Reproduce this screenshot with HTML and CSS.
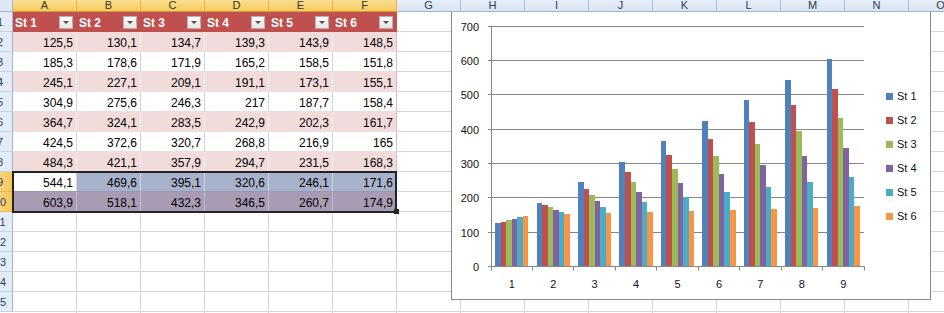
FILE: index.html
```html
<!DOCTYPE html>
<html>
<head>
<meta charset="utf-8">
<link rel="stylesheet" href="styles.css">
</head>
<body>
<div class="sheet">
  <div class="colheads">
    <div class="corner"></div>
    <div class="ch sel">A</div><div class="ch sel">B</div><div class="ch sel">C</div><div class="ch sel">D</div><div class="ch sel">E</div><div class="ch sel">F</div>
    <div class="ch">G</div><div class="ch">H</div><div class="ch">I</div><div class="ch">J</div><div class="ch">K</div><div class="ch">L</div><div class="ch">M</div><div class="ch">N</div><div class="ch">O</div>
  </div>
  <div class="main">
    <div class="rowheads">
      <div class="rh"><span>1</span></div>
      <div class="rh"><span>2</span></div>
      <div class="rh"><span>3</span></div>
      <div class="rh"><span>4</span></div>
      <div class="rh"><span>5</span></div>
      <div class="rh"><span>6</span></div>
      <div class="rh"><span>7</span></div>
      <div class="rh"><span>8</span></div>
      <div class="rh sel"><span>9</span></div>
      <div class="rh sel"><span>10</span></div>
      <div class="rh"><span>11</span></div>
      <div class="rh"><span>12</span></div>
      <div class="rh"><span>13</span></div>
      <div class="rh"><span>14</span></div>
      <div class="rh"><span>15</span></div>
    </div>
    <div class="cells">
      <div class="tbl">
        <div class="hd"><span>St 1</span><i class="dd"></i></div>
        <div class="hd"><span>St 2</span><i class="dd"></i></div>
        <div class="hd"><span>St 3</span><i class="dd"></i></div>
        <div class="hd"><span>St 4</span><i class="dd"></i></div>
        <div class="hd"><span>St 5</span><i class="dd"></i></div>
        <div class="hd"><span>St 6</span><i class="dd"></i></div>

        <div class="v pk">125,5</div><div class="v pk">130,1</div><div class="v pk">134,7</div><div class="v pk">139,3</div><div class="v pk">143,9</div><div class="v pk">148,5</div>
        <div class="v wh">185,3</div><div class="v wh">178,6</div><div class="v wh">171,9</div><div class="v wh">165,2</div><div class="v wh">158,5</div><div class="v wh">151,8</div>
        <div class="v pk">245,1</div><div class="v pk">227,1</div><div class="v pk">209,1</div><div class="v pk">191,1</div><div class="v pk">173,1</div><div class="v pk">155,1</div>
        <div class="v wh">304,9</div><div class="v wh">275,6</div><div class="v wh">246,3</div><div class="v wh">217</div><div class="v wh">187,7</div><div class="v wh">158,4</div>
        <div class="v pk">364,7</div><div class="v pk">324,1</div><div class="v pk">283,5</div><div class="v pk">242,9</div><div class="v pk">202,3</div><div class="v pk">161,7</div>
        <div class="v wh">424,5</div><div class="v wh">372,6</div><div class="v wh">320,7</div><div class="v wh">268,8</div><div class="v wh">216,9</div><div class="v wh">165</div>
        <div class="v pk">484,3</div><div class="v pk">421,1</div><div class="v pk">357,9</div><div class="v pk">294,7</div><div class="v pk">231,5</div><div class="v pk">168,3</div>
        <div class="v active">544,1</div><div class="v s9">469,6</div><div class="v s9">395,1</div><div class="v s9">320,6</div><div class="v s9">246,1</div><div class="v s9">171,6</div>
        <div class="v s10">603,9</div><div class="v s10">518,1</div><div class="v s10">432,3</div><div class="v s10">346,5</div><div class="v s10">260,7</div><div class="v s10">174,9</div>
      </div>
      <div class="selbox"><div class="handle"></div></div>

      <div class="chart">
        <svg class="plot" width="478" height="287" viewBox="0 0 478 287">
          <g class="grid">
            <line x1="36" y1="14.5" x2="412" y2="14.5"/>
            <line x1="36" y1="48.5" x2="412" y2="48.5"/>
            <line x1="36" y1="82.5" x2="412" y2="82.5"/>
            <line x1="36" y1="117.5" x2="412" y2="117.5"/>
            <line x1="36" y1="151.5" x2="412" y2="151.5"/>
            <line x1="36" y1="185.5" x2="412" y2="185.5"/>
            <line x1="36" y1="220.5" x2="412" y2="220.5"/>
          </g>
          <g id="bars" shape-rendering="crispEdges"></g>
          <g class="grid">
            <line x1="39.5" y1="14.5" x2="39.5" y2="254.5"/>
            <line x1="36" y1="254.5" x2="412.5" y2="254.5"/>
            <line x1="39.5" y1="254.5" x2="39.5" y2="258.5"/>
            <line x1="80.5" y1="254.5" x2="80.5" y2="258.5"/>
            <line x1="121.5" y1="254.5" x2="121.5" y2="258.5"/>
            <line x1="163.5" y1="254.5" x2="163.5" y2="258.5"/>
            <line x1="204.5" y1="254.5" x2="204.5" y2="258.5"/>
            <line x1="246.5" y1="254.5" x2="246.5" y2="258.5"/>
            <line x1="287.5" y1="254.5" x2="287.5" y2="258.5"/>
            <line x1="329.5" y1="254.5" x2="329.5" y2="258.5"/>
            <line x1="370.5" y1="254.5" x2="370.5" y2="258.5"/>
            <line x1="412.5" y1="254.5" x2="412.5" y2="258.5"/>
          </g>
          <g class="ylab">
            <text x="27" y="18.5">700</text>
            <text x="27" y="52.5">600</text>
            <text x="27" y="86.5">500</text>
            <text x="27" y="121.5">400</text>
            <text x="27" y="155.5">300</text>
            <text x="27" y="189.5">200</text>
            <text x="27" y="224.5">100</text>
            <text x="27" y="258.5">0</text>
          </g>
          <g class="xlab">
            <text x="59.7" y="276">1</text>
            <text x="101.2" y="276">2</text>
            <text x="142.6" y="276">3</text>
            <text x="184.1" y="276">4</text>
            <text x="225.5" y="276">5</text>
            <text x="267" y="276">6</text>
            <text x="308.4" y="276">7</text>
            <text x="349.9" y="276">8</text>
            <text x="391.3" y="276">9</text>
          </g>
          <g class="legend">
            <rect x="434" y="81" width="7" height="7" fill="#4f81bd"/><text x="445" y="88">St 1</text>
            <rect x="434" y="105" width="7" height="7" fill="#c0504d"/><text x="445" y="112">St 2</text>
            <rect x="434" y="129" width="7" height="7" fill="#9bbb59"/><text x="445" y="136">St 3</text>
            <rect x="434" y="153" width="7" height="7" fill="#8064a2"/><text x="445" y="160">St 4</text>
            <rect x="434" y="177" width="7" height="7" fill="#4bacc6"/><text x="445" y="184">St 5</text>
            <rect x="434" y="201" width="7" height="7" fill="#f79646"/><text x="445" y="208">St 6</text>
          </g>
        </svg>
      </div>
    </div>
  </div>
</div>
<script src="script.js"></script>
</body>
</html>
```

FILE: styles.css
```css
html, body {
  margin: 0;
  padding: 0;
  background: #fff;
  width: 944px;
  height: 313px;
  overflow: hidden;
}
body {
  font-family: "Liberation Sans", Arial, sans-serif;
  color: #000;
}
.sheet {
  width: 944px;
  height: 313px;
  overflow: hidden;
}
.colheads {
  display: flex;
  height: 12px;
  overflow: hidden;
}
.corner {
  flex: 0 0 13px;
  box-sizing: border-box;
  background: #dfe8f4;
  border-right: 1px solid #9eb6ce;
  border-bottom: 1px solid #9eb6ce;
}
.ch {
  flex: 0 0 64px;
  box-sizing: border-box;
  height: 12px;
  background: linear-gradient(#e6eef8, #d9e4f2);
  border-right: 1px solid #a9bfd6;
  border-bottom: 1px solid #9eb6ce;
  font-size: 11px;
  line-height: 11px;
  text-align: center;
  color: #2e3d52;
}
.ch.sel {
  background: linear-gradient(#fadf92, #f6ca5e);
  border-right-color: #e7b64f;
  border-bottom-color: #d59f35;
  color: #3a3320;
}
.main {
  display: flex;
}
.rowheads {
  flex: 0 0 13px;
  overflow: hidden;
}
.rh {
  height: 20px;
  box-sizing: border-box;
  background: #e4ecf7;
  border-right: 1px solid #9eb6ce;
  border-bottom: 1px solid #c5d3e3;
  overflow: hidden;
}
.rh span {
  display: block;
  width: 26px;
  margin-left: -13px;
  text-align: center;
  font-size: 11px;
  line-height: 20px;
  color: #2e3d52;
}
.rh.sel {
  background: linear-gradient(to right, #f8d47c, #f6c658);
  border-right-color: #d59f35;
  border-bottom-color: #e7b64f;
}
.cells {
  flex: 1 1 auto;
  position: relative;
  height: 301px;
  background-image:
    repeating-linear-gradient(to right, transparent 0, transparent 63px, #d4d4d4 63px, #d4d4d4 64px),
    repeating-linear-gradient(to bottom, transparent 0, transparent 19px, #d4d4d4 19px, #d4d4d4 20px);
}
.tbl {
  display: grid;
  grid-template-columns: repeat(6, 64px);
  grid-auto-rows: 20px;
  width: 384px;
}
.tbl > div {
  box-sizing: border-box;
  border-right: 1px solid #d4d4d4;
  border-bottom: 1px solid #d4d4d4;
  font-size: 12px;
}
.tbl > div:nth-child(6n) {
  border-right-color: #e6b8b7;
}
.v {
  text-align: right;
  padding: 1px 3px 0 0;
  line-height: 20px;
  white-space: nowrap;
}
.hd {
  display: flex;
  justify-content: space-between;
  align-items: flex-start;
  background: #c0504d;
  border-right-color: #c0504d !important;
  border-bottom-color: #c0504d !important;
  color: #fff;
  font-weight: bold;
  padding: 0 3px 0 2px;
}
.hd span {
  line-height: 20px;
  padding-top: 1px;
  white-space: nowrap;
}
.dd {
  display: flex;
  align-items: center;
  justify-content: center;
  width: 14px;
  height: 13px;
  margin-top: 4px;
  box-sizing: border-box;
  border: 1px solid #b3b3b3;
  background: linear-gradient(#ffffff, #e4e4e4);
}
.dd::after {
  content: "";
  width: 0;
  height: 0;
  border-left: 3px solid transparent;
  border-right: 3px solid transparent;
  border-top: 3px solid #4a4a4a;
}
.pk {
  background: #f2dcdb;
  border-right-color: #fbf0f0 !important;
  border-bottom-color: #f2dcdb !important;
}
.tbl > .pk:nth-child(6n) {
  border-right-color: #e6b8b7 !important;
}
.wh {
  background: #fff;
  border-bottom-color: #f2dcdb !important;
}
.active {
  background: #fff;
  border-right-color: #d0d5e3 !important;
  border-bottom-color: #9a97b0 !important;
}
.s9 {
  background: #a9b2cc;
  border-right-color: #cfd4e3 !important;
  border-bottom-color: #9a97b0 !important;
}
.s10 {
  background: #a99bb4;
  border-right-color: #c4bbcc !important;
  border-bottom-color: #a99bb4 !important;
}
.selbox {
  position: absolute;
  left: -1px;
  top: 159px;
  width: 385px;
  height: 42px;
  box-sizing: border-box;
  border: 2px solid #1f2622;
}
.handle {
  position: absolute;
  right: -4px;
  bottom: -3px;
  width: 5px;
  height: 5px;
  background: #1f2622;
}
.chart {
  position: absolute;
  left: 438px;
  top: 0;
  width: 480px;
  height: 288px;
  box-sizing: border-box;
  background: #fff;
  border: 1px solid #878787;
  border-top: none;
}
.plot {
  display: block;
  font-family: "Liberation Sans", Arial, sans-serif;
  font-size: 11px;
}
.grid line {
  stroke: #868686;
  stroke-width: 1;
}
.ylab text {
  text-anchor: end;
  fill: #111;
}
.xlab text {
  text-anchor: middle;
  fill: #111;
}
.legend text {
  fill: #111;
}
```

FILE: script.js
```js
(function () {
  var colors = ['#4f81bd', '#c0504d', '#9bbb59', '#8064a2', '#4bacc6', '#f79646'];
  var cells = document.querySelectorAll('.tbl .v');
  var g = document.getElementById('bars');
  var ns = 'http://www.w3.org/2000/svg';
  var left = 39, right = 412, base = 254.5, perUnit = 34.33 / 100;
  var catW = (right - left) / 9;
  var w = catW / 7.5;
  for (var r = 0; r < 9; r++) {
    for (var c = 0; c < 6; c++) {
      var v = parseFloat(cells[r * 6 + c].textContent.replace(',', '.'));
      var h = v * perUnit;
      var rect = document.createElementNS(ns, 'rect');
      rect.setAttribute('x', (left + r * catW + 0.75 * w + c * w).toFixed(2));
      rect.setAttribute('y', (base - h).toFixed(2));
      rect.setAttribute('width', w.toFixed(2));
      rect.setAttribute('height', h.toFixed(2));
      rect.setAttribute('fill', colors[c]);
      g.appendChild(rect);
    }
  }
})();
```
